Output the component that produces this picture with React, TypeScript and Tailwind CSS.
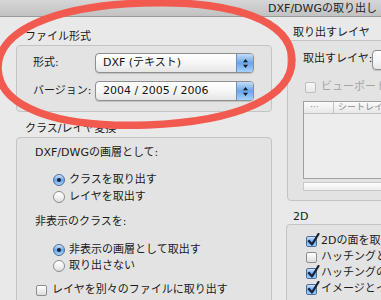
import React from "react";

const Arrows = () => (
  <svg width="7" height="11" viewBox="0 0 7 11">
    <path d="M3.5 1 L6 4.2 L1 4.2 Z" fill="#1a1a1a" />
    <path d="M3.5 10 L6 6.8 L1 6.8 Z" fill="#1a1a1a" />
  </svg>
);

const Popup = ({ text, w }: { text: string; w: string }) => (
  <div
    className={`${w} h-[20px] flex items-stretch rounded-[4px] border border-[#8e8e8e] bg-gradient-to-b from-[#ffffff] via-[#f6f6f6] to-[#e6e6e6] shadow-[0_1px_1px_rgba(0,0,0,0.15)] overflow-hidden shrink-0`}
  >
    <div className="flex-1 flex items-center pl-[7px] text-[11px] leading-[12px] text-[#141414] whitespace-nowrap">
      {text}
    </div>
    <div className="w-[17px] flex items-center justify-center border-l border-[#6d8fbd] bg-gradient-to-b from-[#c4dcf6] via-[#6aa5e8] to-[#a6d2fb]">
      <Arrows />
    </div>
  </div>
);

const Radio = ({ on, label }: { on?: boolean; label: string }) => (
  <div className="h-[16px] flex items-center pl-[36px]">
    {on ? (
      <div className="w-[12px] h-[12px] rounded-full border border-[#4b6d9c] bg-gradient-to-b from-[#d3e6fb] via-[#68a4e6] to-[#a8d5fd] flex items-center justify-center shrink-0">
        <div className="w-[4px] h-[4px] rounded-full bg-[#15243a]" />
      </div>
    ) : (
      <div className="w-[12px] h-[12px] rounded-full border border-[#8d8d8d] bg-gradient-to-b from-[#ffffff] via-[#f3f3f3] to-[#dcdcdc] shrink-0" />
    )}
    <span className="ml-[4px] text-[11px] leading-[12px] text-[#1a1a1a] whitespace-nowrap">{label}</span>
  </div>
);

const Check = ({ on, disabled }: { on?: boolean; disabled?: boolean }) =>
  on ? (
    <div className="relative w-[11px] h-[11px] rounded-[2px] border border-[#4b6d9c] bg-gradient-to-b from-[#d3e6fb] via-[#68a4e6] to-[#a8d5fd] shrink-0">
      <svg className="absolute left-[0px] top-[-4px]" width="13" height="14" viewBox="0 0 13 14">
        <path d="M2 8 L5 11.5 L11.5 1" stroke="#16223a" strokeWidth="2.2" fill="none" strokeLinecap="round" strokeLinejoin="round" />
      </svg>
    </div>
  ) : (
    <div
      className={`w-[11px] h-[11px] rounded-[2px] border ${
        disabled ? "border-[#bdbdbd] from-[#f7f7f7] to-[#e8e8e8]" : "border-[#8d8d8d] from-[#ffffff] to-[#dedede]"
      } bg-gradient-to-b shrink-0`}
    />
  );

export default function App() {
  return (
    <div className="relative w-[381px] h-[300px] overflow-hidden bg-[#e9e9e9] font-['DejaVu_Sans','Noto_Sans_CJK_JP',sans-serif] text-[#1a1a1a]">
      {/* title bar */}
      <div className="h-[17px] flex items-center justify-end pr-[4px] pt-[2px] bg-gradient-to-b from-[#d6d6d6] to-[#c2c2c2] border-b border-[#9a9a9a]">
        <span className="text-[11px] leading-[12px] text-[#222] whitespace-nowrap">DXF/DWGの取り出し</span>
      </div>

      <div className="flex items-start">
        {/* left column */}
        <div className="ml-[16px] w-[256px] flex flex-col shrink-0">
          <div className="mt-[14px] h-[12px] pl-[9px] text-[11px] leading-[12px] whitespace-nowrap">ファイル形式</div>
          <div className="mt-[2px] h-[67px] rounded-[4px] border border-[#c4c4c4] bg-[#e3e3e3] flex flex-col pt-[7px]">
            <div className="h-[20px] flex items-center pl-[16px]">
              <span className="w-[62px] text-[11px] leading-[12px] whitespace-nowrap">形式:</span>
              <Popup text="DXF (テキスト)" w="w-[159px]" />
            </div>
            <div className="mt-[8px] h-[20px] flex items-center pl-[16px]">
              <span className="w-[62px] text-[11px] leading-[12px] whitespace-nowrap">バージョン:</span>
              <Popup text="2004 / 2005 / 2006" w="w-[159px]" />
            </div>
          </div>

          <div className="mt-[11px] h-[12px] pl-[9px] text-[11px] leading-[12px] whitespace-nowrap">クラス/レイヤ変換</div>
          <div className="mt-[2px] h-[180px] rounded-[4px] border border-[#c4c4c4] bg-[#e3e3e3] flex flex-col pt-[9px]">
            <div className="h-[12px] pl-[18px] text-[11px] leading-[12px] whitespace-nowrap">DXF/DWGの画層として:</div>
            <div className="mt-[13px]">
              <Radio on label="クラスを取り出す" />
            </div>
            <div className="mt-[1px]">
              <Radio label="レイヤを取出す" />
            </div>
            <div className="mt-[11px] h-[12px] pl-[18px] text-[11px] leading-[12px] whitespace-nowrap">非表示のクラスを:</div>
            <div className="mt-[14px]">
              <Radio on label="非表示の画層として取出す" />
            </div>
            <Radio label="取り出さない" />
            <div className="mt-[8px] h-[16px] flex items-center pl-[19px]">
              <Check />
              <span className="ml-[5px] text-[11px] leading-[12px] whitespace-nowrap">レイヤを別々のファイルに取り出す</span>
            </div>
          </div>
        </div>

        {/* right column */}
        <div className="ml-[14px] w-[200px] flex flex-col shrink-0">
          <div className="mt-[10px] h-[12px] pl-[7px] text-[11px] leading-[12px] whitespace-nowrap">取り出すレイヤ</div>
          <div className="mt-[1px] ml-[1px] h-[161px] rounded-[4px] border border-[#c4c4c4] bg-[#e3e3e3] flex flex-col">
            <div className="mt-[9px] h-[20px] flex items-center pl-[15px]">
              <span className="w-[72px] -mt-[3px] text-[11px] leading-[12px] whitespace-nowrap">取出すレイヤ:</span>
              <Popup text="" w="w-[120px]" />
            </div>
            <div className="mt-[11px] h-[12px] flex items-center pl-[17px]">
              <Check disabled />
              <span className="ml-[5px] text-[11px] leading-[12px] text-[#a3a3a3] whitespace-nowrap">ビューポートのレイヤ</span>
            </div>
            <div className="mt-[8px] ml-[15px] w-[180px] h-[78px] border border-[#a0a0a0] bg-[#ededed] flex flex-col">
              <div className="h-[12px] flex bg-gradient-to-b from-[#fbfbfb] to-[#e8e8e8] border-b border-[#c2c2c2] text-[9px] leading-[11px] text-[#8a8a8a]">
                <div className="w-[30px] pl-[6px] border-r border-[#c2c2c2]">···</div>
                <div className="pl-[4px] whitespace-nowrap">シートレイヤ</div>
              </div>
            </div>
            <div className="mt-[3px] ml-[15px] w-[180px] h-[9px] border border-[#c8c8c8] bg-gradient-to-b from-[#fdfdfd] to-[#ececec]" />
          </div>

          <div className="mt-[10px] h-[12px] pl-[7px] text-[11px] leading-[12px] whitespace-nowrap">2D</div>
          <div className="mt-[1px] h-[120px] rounded-[4px] border border-[#c4c4c4] bg-[#e3e3e3] flex flex-col pt-[8px]">
            <div className="h-[16px] flex items-center pl-[19px]">
              <Check on />
              <span className="ml-[4px] text-[11px] leading-[12px] whitespace-nowrap">
                2Dの面を取<span className="text-[#e8743f]">り</span>出す
              </span>
            </div>
            <div className="h-[16px] flex items-center pl-[19px]">
              <Check />
              <span className="ml-[4px] text-[11px] leading-[12px] whitespace-nowrap">ハッチングとして取り出す</span>
            </div>
            <div className="h-[16px] flex items-center pl-[19px]">
              <Check on />
              <span className="ml-[4px] text-[11px] leading-[12px] whitespace-nowrap">ハッチングの取り出し</span>
            </div>
            <div className="h-[16px] flex items-center pl-[19px]">
              <Check on />
              <span className="ml-[4px] text-[11px] leading-[12px] whitespace-nowrap">イメージとイメージ</span>
            </div>
          </div>
        </div>
      </div>

      {/* red annotation ellipse */}
      <svg className="absolute left-0 top-0 pointer-events-none" width="381" height="300" viewBox="0 0 381 300">
        <path
          d="M 292 64 C 292 101.8, 236.1 125, 145 125 C 53.9 125, -2 101.8, -2 64 C -2 26.2, 53.9 3, 145 3 C 236.1 3, 292 26.2, 292 64 Z"
          transform="rotate(-2 145 64)"
          fill="none"
          stroke="#f25a50"
          strokeWidth="7.5"
        />
      </svg>
    </div>
  );
}
